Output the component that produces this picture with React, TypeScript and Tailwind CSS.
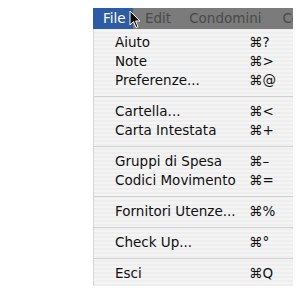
import React from "react";

type Item = { label: string; key: string } | "sep";

const items: Item[] = [
  { label: "Aiuto", key: "?" },
  { label: "Note", key: ">" },
  { label: "Preferenze...", key: "@" },
  "sep",
  { label: "Cartella...", key: "<" },
  { label: "Carta Intestata", key: "+" },
  "sep",
  { label: "Gruppi di Spesa", key: "\u2013" },
  { label: "Codici Movimento", key: "=" },
  "sep",
  { label: "Fornitori Utenze...", key: "%" },
  "sep",
  { label: "Check Up...", key: "\u00B0" },
  "sep",
  { label: "Esci", key: "Q" },
];

function Cursor() {
  return (
    <svg
      width="12"
      height="19"
      viewBox="0 0 12 19"
      className="absolute left-[129px] top-[10px]"
    >
      <path
        d="M1 1 L1 15 L4.5 11.5 L7 17.5 L9 16.6 L6.6 11 L11 11 Z"
        fill="#111"
        stroke="#fff"
        strokeWidth="1"
        strokeLinejoin="round"
      />
    </svg>
  );
}

export default function App() {
  return (
    <div
      className="relative w-[305px] h-[296px] bg-white overflow-hidden"
      style={{ fontFamily: '"DejaVu Sans", "Liberation Sans", sans-serif' }}
    >
      <div className="pt-[8px] pl-[93px] w-[293px]">
        <div className="flex h-[21px] w-[200px] bg-[#7b7b7b] text-[13.5px] leading-[21px] overflow-hidden whitespace-nowrap">
          <div className="bg-[#2d5ba6] text-white pl-[10px] w-[40px] shrink-0">File</div>
          <div className="text-[#4a4a4a] pl-[12px] shrink-0">Edit</div>
          <div className="text-[#4a4a4a] pl-[18px] shrink-0">Condomini</div>
          <div className="text-[#4a4a4a] pl-[21px] shrink-0">Co</div>
        </div>
        <div className="w-[200px] pt-[4px] pb-[3px] border-l border-[#d6d6d6] bg-[repeating-linear-gradient(0deg,#eeeeee_0px,#eeeeee_2px,#f4f4f4_2px,#f4f4f4_4px)] text-[13.5px] text-[#111]">
          {items.map((it, i) =>
            it === "sep" ? (
              <div key={i} className="h-[12px] pt-[6px]">
                <div className="h-px bg-[#d2d2d2]" />
              </div>
            ) : (
              <div key={i} className="flex items-center h-[19px] pl-[21px] whitespace-nowrap">
                <span className="flex-1">{it.label}</span>
                <span className="w-[44px]">{"\u2318" + it.key}</span>
              </div>
            )
          )}
        </div>
      </div>
      <Cursor />
    </div>
  );
}
